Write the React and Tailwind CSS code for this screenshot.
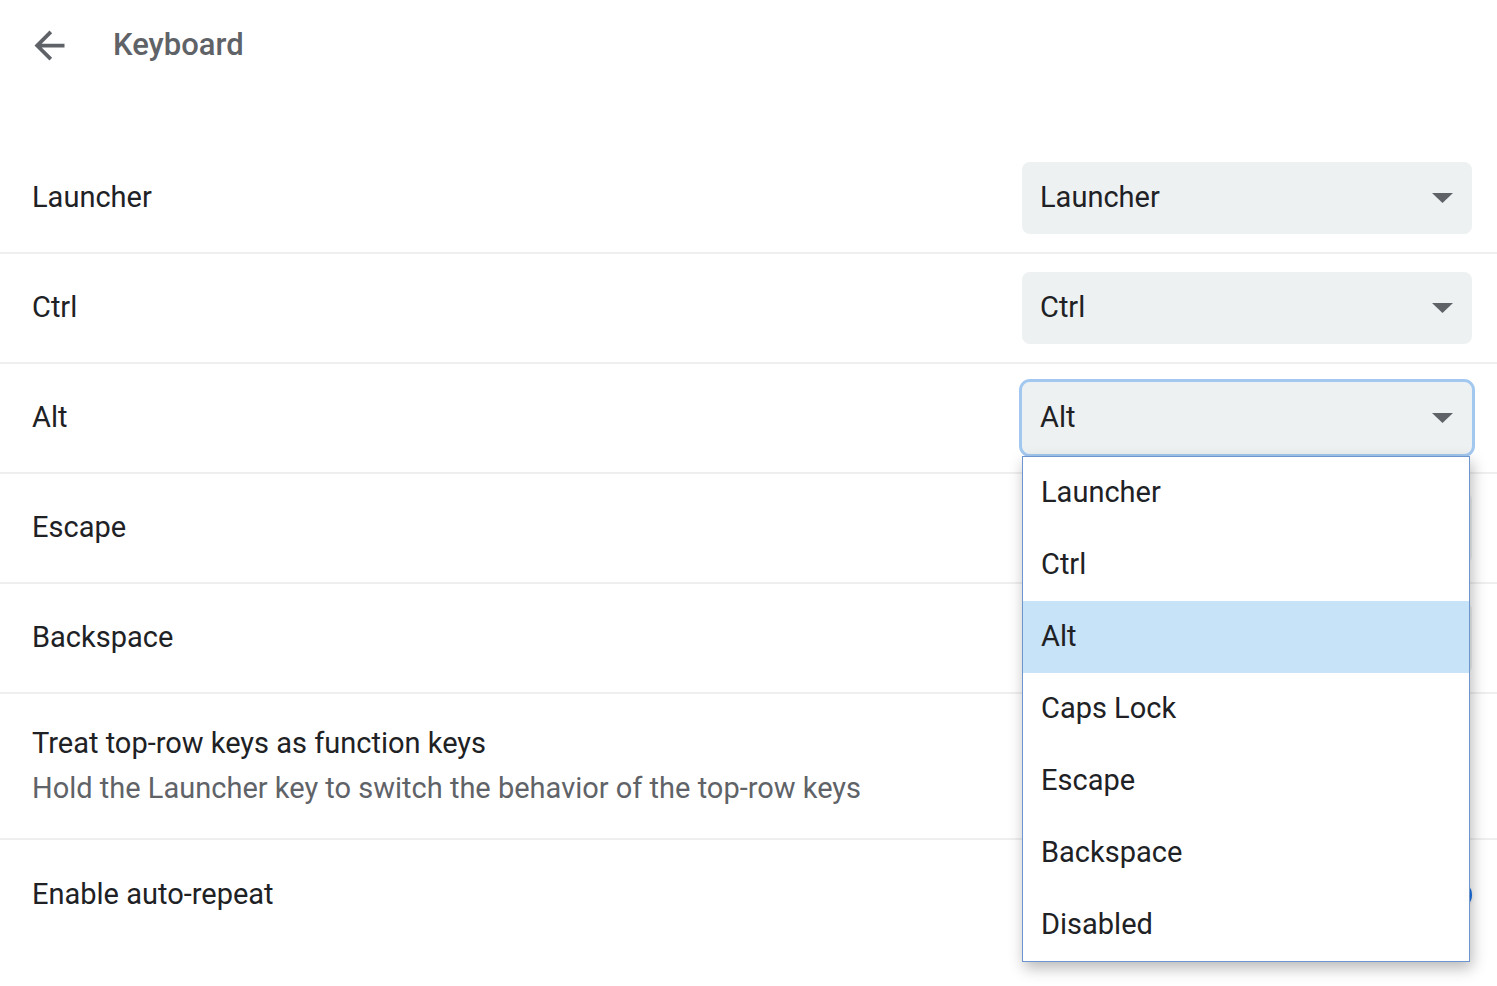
import React from "react";

const options = ["Launcher", "Ctrl", "Alt", "Caps Lock", "Escape", "Backspace", "Disabled"];

const Caret = () => (
  <svg width="21" height="10" viewBox="0 0 21 10" className="shrink-0">
    <path d="M0 0h21l-10.5 10z" fill="#5f6368" />
  </svg>
);

const Select = ({ value, open }) => (
  <div className="relative w-[450px]">
    <div
      className={
        "flex h-[72px] items-center justify-between rounded-lg bg-[#eef1f2] pl-[18px] pr-[19px] text-[29px] text-[#202124] " +
        (open ? "outline outline-[3px] outline-[#a3c8f0]" : "")
      }
    >
      <span>{value}</span>
      <Caret />
    </div>
    {open && (
      <div className="absolute left-0 top-[calc(100%+2px)] z-10 w-[448px] border border-[#6d96cf] bg-white shadow-[2px_6px_14px_rgba(0,0,0,0.28)]">
        {options.map((o) => (
          <div
            key={o}
            className={
              "flex h-[72px] items-center pl-[18px] text-[29px] text-[#202124] " +
              (o === value ? "bg-[#c7e3f8]" : "")
            }
          >
            {o}
          </div>
        ))}
      </div>
    )}
  </div>
);

const Toggle = ({ on }) => (
  <div className="relative flex h-[32px] w-[64px] items-center">
    <div className={"h-[20px] w-[56px] rounded-full " + (on ? "bg-[#a8c7fa]" : "bg-[#bdc1c6]")} />
    <div
      className={
        "absolute top-[2px] h-[28px] w-[28px] rounded-full shadow " +
        (on ? "right-0 bg-[#1a73e8]" : "left-0 bg-white")
      }
    />
  </div>
);

const Row = ({ label, children, last }) => (
  <div
    className={
      "flex h-[110px] items-center justify-between pl-8 pr-[25px] " +
      (last ? "" : "border-b-2 border-[#efefef]")
    }
  >
    <span className="text-[29px] text-[#202124]">{label}</span>
    {children}
  </div>
);

export default function App() {
  return (
    <div
      className="min-h-screen w-full bg-white"
      style={{ fontFamily: "Roboto, 'Noto Sans', sans-serif" }}
    >
      <div className="flex h-[90px] items-center pl-[27px]">
        <svg width="45" height="45" viewBox="0 0 24 24">
          <path
            d="M20 11H7.83l5.59-5.59L12 4l-8 8 8 8 1.41-1.41L7.83 13H20v-2z"
            fill="#5f6368"
          />
        </svg>
        <h1 className="ml-[41px] text-[31px] font-medium text-[#5f6368]">Keyboard</h1>
      </div>
      <div className="mt-[54px]">
        <Row label="Launcher">
          <Select value="Launcher" />
        </Row>
        <Row label="Ctrl">
          <Select value="Ctrl" />
        </Row>
        <Row label="Alt">
          <Select value="Alt" open />
        </Row>
        <Row label="Escape">
          <Select value="Escape" />
        </Row>
        <Row label="Backspace">
          <Select value="Backspace" />
        </Row>
        <div className="flex h-[146px] items-center justify-between border-b-2 border-[#efefef] pl-8 pr-[25px]">
          <div className="flex flex-col">
            <span className="text-[29px] leading-[45px] text-[#202124]">
              Treat top-row keys as function keys
            </span>
            <span className="text-[29px] leading-[45px] text-[#5f6368]">
              Hold the Launcher key to switch the behavior of the top-row keys
            </span>
          </div>
          <Toggle on={false} />
        </div>
        <Row label="Enable auto-repeat" last>
          <Toggle on />
        </Row>
      </div>
    </div>
  );
}
